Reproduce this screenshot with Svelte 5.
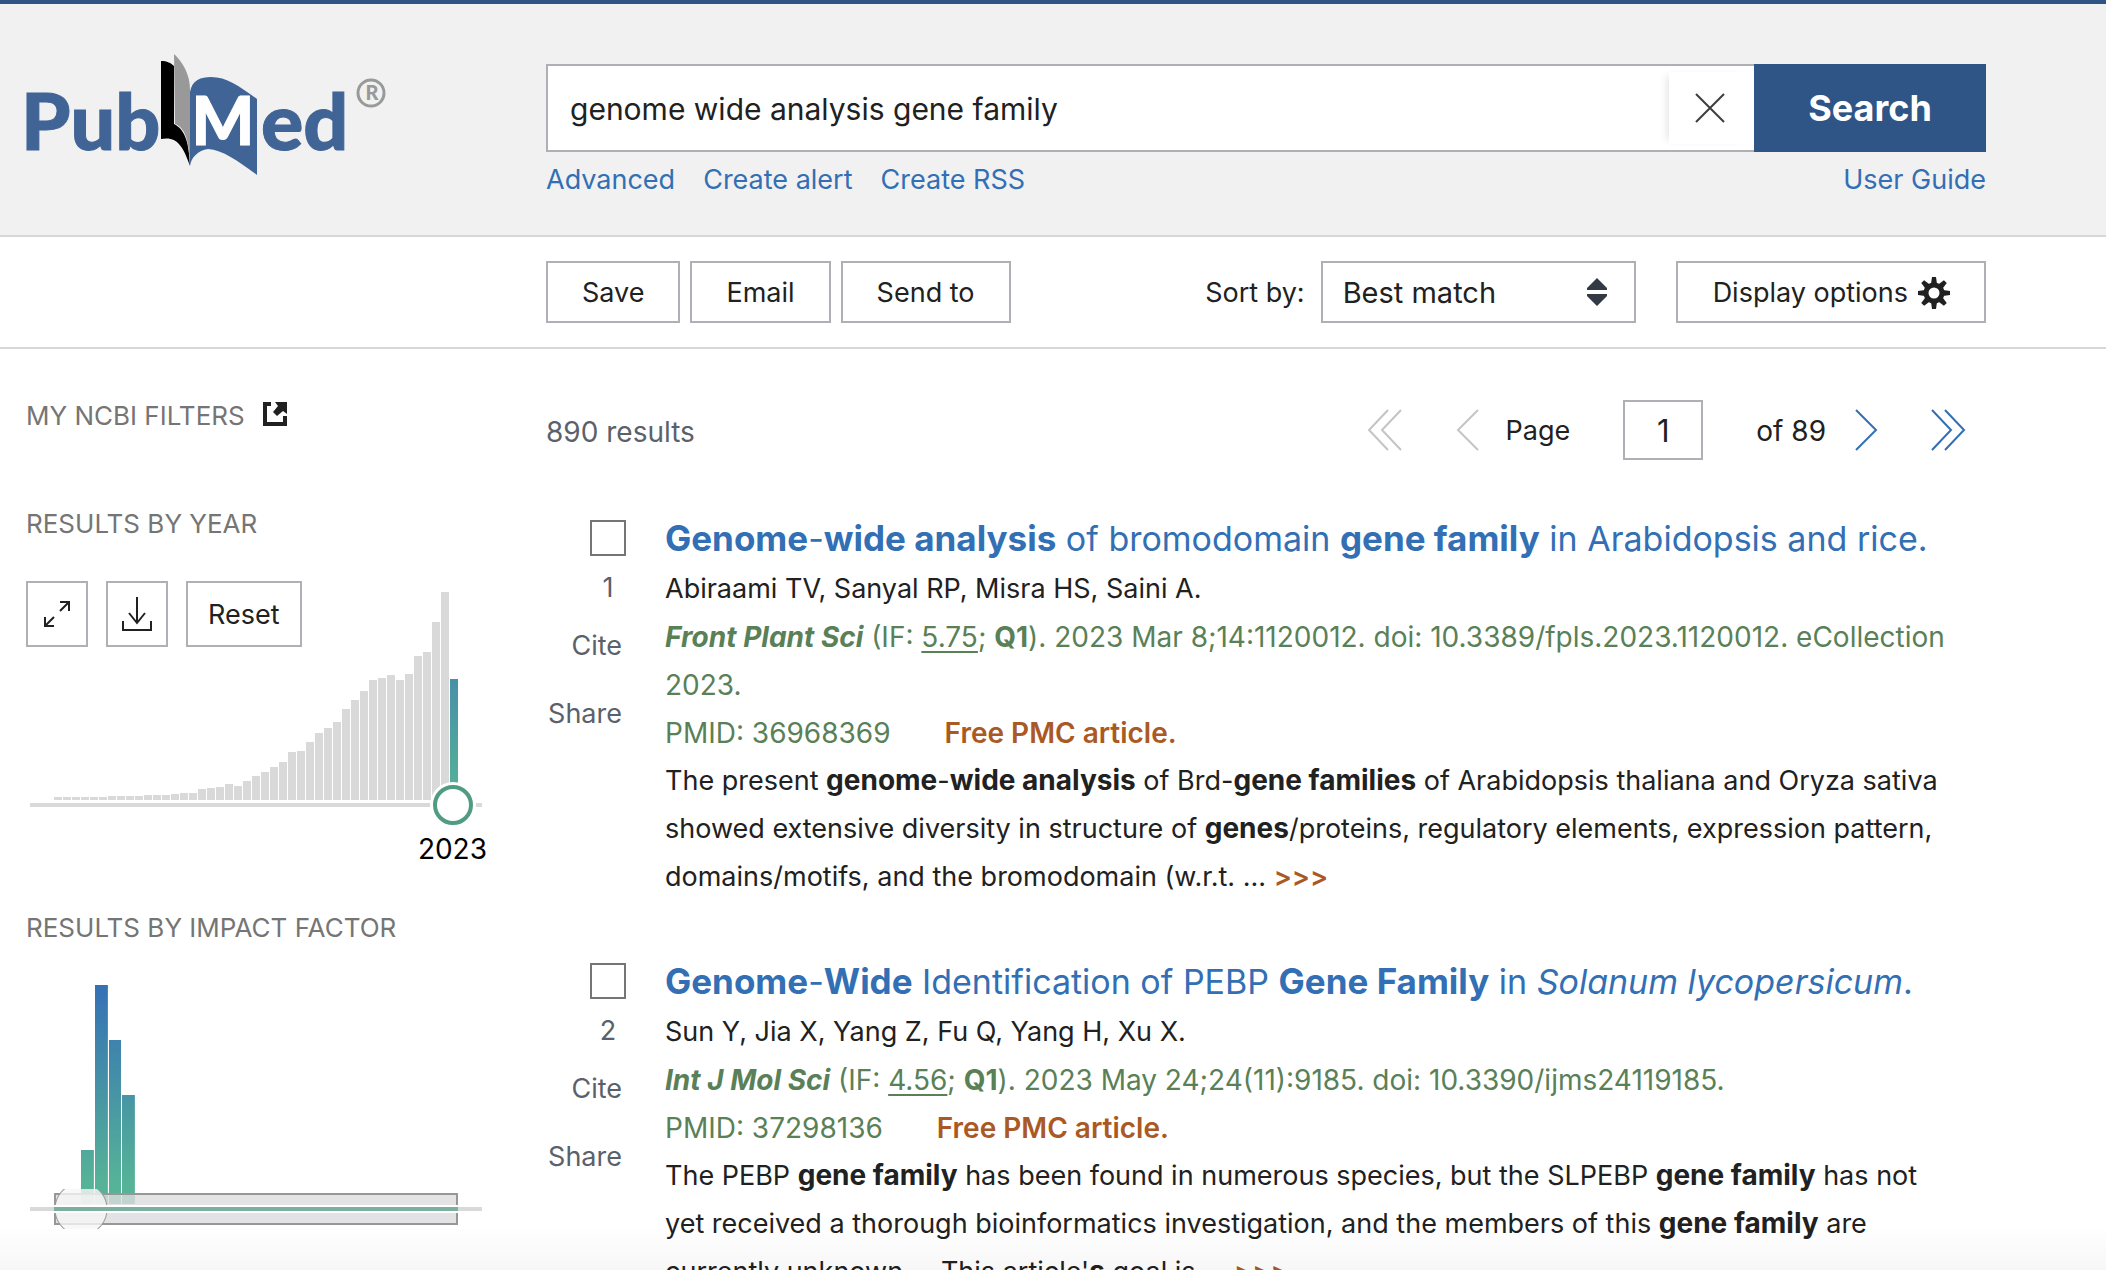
<script lang="ts">
	type Article = {
		id: number;
		title: string;
		authors: string;
		journal: string;
		impact: string;
		citation: string;
		pmid: string;
		snippet: string;
	};

	let query = 'genome wide analysis gene family';
	let sort = 'Best match';
	let page = '1';
	let year = 2023;
	let impactFactor = 3;

	// bar heights in px, one per year
	const years = [
		3, 3, 3, 3, 3, 3, 4, 4, 4, 4, 5, 5, 5, 6, 7, 7, 11, 12, 13, 16, 14, 19,
		24, 28, 33, 38, 48, 49, 58, 67, 72, 78, 91, 100, 109, 120, 122, 125, 120,
		126, 144, 148, 178, 208, 121
	];
	const impacts = [54, 219, 164, 109];

	const articles: Article[] = [
		{
			id: 1,
			title:
				'<b>Genome</b>-<b>wide analysis</b> of bromodomain <b>gene family</b> in Arabidopsis and rice.',
			authors: 'Abiraami TV, Sanyal RP, Misra HS, Saini A.',
			journal: 'Front Plant Sci',
			impact: '5.75',
			citation: '2023 Mar 8;14:1120012. doi: 10.3389/fpls.2023.1120012. eCollection 2023.',
			pmid: '36968369',
			snippet:
				'The present <b>genome</b>-<b>wide analysis</b> of Brd-<b>gene families</b> of Arabidopsis thaliana and Oryza sativa showed extensive diversity in structure of <b>genes</b>/proteins, regulatory elements, expression pattern, domains/motifs, and the bromodomain (w.r.t. ...'
		},
		{
			id: 2,
			title:
				'<b>Genome</b>-<b>Wide</b> Identification of PEBP <b>Gene Family</b> in <i>Solanum lycopersicum</i>.',
			authors: 'Sun Y, Jia X, Yang Z, Fu Q, Yang H, Xu X.',
			journal: 'Int J Mol Sci',
			impact: '4.56',
			citation: '2023 May 24;24(11):9185. doi: 10.3390/ijms24119185.',
			pmid: '37298136',
			snippet:
				"The PEBP <b>gene family</b> has been found in numerous species, but the SLPEBP <b>gene family</b> has not yet received a thorough bioinformatics investigation, and the members of this <b>gene family</b> are currently unknown. ...This article'<b>s</b> goal is ..."
		}
	];
</script>

<svelte:head>
	<title>genome wide analysis gene family - Search Results - PubMed</title>
</svelte:head>

<header class="header">
	<a class="logo" href="#home" aria-label="PubMed">
		<svg viewBox="0 0 370 130" width="370" height="130">
			<g class="logo-text">
				<text x="-5" y="100">Pub</text>
				<text x="235" y="100">ed</text>
			</g>
			<path d="M135 11C141 11 145 13 148 16V74C158 79 163 90 164 116C157 96 151 86 135 89Z" fill="#000" />
			<path d="M148 4C157 12 164 25 164 39V116C163 92 160 78 149 74Z" fill="#999" />
			<path d="M164 42C166 30 175 27 185 27C201 27 213 36 231 49V125C212 111 197 100 182 99C172 100 165 108 164 116Z" fill="#416496" />
			<text class="logo-m" x="197" y="95" text-anchor="middle">M</text>
			<circle cx="345" cy="43" r="13" fill="none" stroke="#999" stroke-width="3" />
			<text class="logo-r" x="346" y="50" text-anchor="middle">R</text>
		</svg>
	</a>
	<form class="search" on:submit|preventDefault>
		<div class="search-row">
			<div class="search-box">
				<input type="text" aria-label="Search term" bind:value={query} />
				<button type="button" class="clear" aria-label="Clear search input" on:click={() => (query = '')}>
					<svg viewBox="0 0 30 30" width="30" height="30">
						<path d="M1 1L29 29M29 1L1 29" stroke="#3d3d3d" stroke-width="2" />
					</svg>
				</button>
			</div>
			<button type="submit" class="search-button">Search</button>
		</div>
		<nav class="search-links">
			<a href="#advanced">Advanced</a>
			<a href="#alert">Create alert</a>
			<a href="#rss">Create RSS</a>
			<a class="guide" href="#guide">User Guide</a>
		</nav>
	</form>
</header>

<div class="toolbar">
	<button class="btn">Save</button>
	<button class="btn">Email</button>
	<button class="btn">Send to</button>
	<label class="sort-label" for="sort">Sort by:</label>
	<div class="select">
		<select id="sort" bind:value={sort}>
			<option>Best match</option>
			<option>Most recent</option>
			<option>Publication date</option>
		</select>
		<svg viewBox="0 0 22 28" width="22" height="28">
			<path d="M11 0L21 10V12H1V10ZM1 16H21V18L11 28L1 18Z" fill="#323a45" />
		</svg>
	</div>
	<button class="btn display">
		Display options
		<svg viewBox="0 0 32 32" width="32" height="32">
			<g fill="#212121">
				{#each [0, 45, 90, 135, 180, 225, 270, 315] as angle}
					<path d="M13 7L14 0H18L19 7Z" transform="rotate({angle} 16 16)" />
				{/each}
			</g>
			<circle cx="16" cy="16" r="8" fill="none" stroke="#212121" stroke-width="5" />
		</svg>
	</button>
</div>

<div class="content">
	<aside class="sidebar">
		<h3 class="filters">
			MY NCBI FILTERS
			<svg viewBox="0 0 24 24" width="24" height="24">
				<path d="M8 0H0V24H24V14H20V20H4V4H8Z" fill="#212121" />
				<path d="M12 0H24V12L20 9L14 14L10 10L15 4Z" fill="#212121" />
			</svg>
		</h3>

		<h3>RESULTS BY YEAR</h3>
		<div class="timeline">
			<div class="timeline-buttons">
				<button class="btn square" aria-label="Expand">
					<svg viewBox="0 0 28 28" width="28" height="28">
						<path d="M17 2H26V11M26 2L17 11M2 17V26H11M2 26L11 17" fill="none" stroke="#212121" stroke-width="2" />
					</svg>
				</button>
				<button class="btn square" aria-label="Download">
					<svg viewBox="0 0 30 34" width="30" height="34">
						<path d="M15 0V26M7 16L15 26L23 16M1 24V33H29V24" fill="none" stroke="#212121" stroke-width="2" />
					</svg>
				</button>
				<button class="btn reset">Reset</button>
			</div>
			<div class="bars year-bars">
				{#each years as height, i}
					<span class:selected={i === years.length - 1} style="height: {height}px"></span>
				{/each}
			</div>
			<input class="year-range" type="range" aria-label="Year" min="1978" max="2024" bind:value={year} />
			<p class="year-label">{year}</p>
		</div>

		<h3>RESULTS BY IMPACT FACTOR</h3>
		<div class="impact">
			<div class="bars impact-bars">
				{#each impacts as height}
					<span style="height: {height}px"></span>
				{/each}
			</div>
			<div class="impact-slider">
				<div class="impact-box"></div>
				<input class="impact-range" type="range" aria-label="Impact factor" min="0" max="50" bind:value={impactFactor} />
				<div class="impact-line"></div>
			</div>
		</div>
	</aside>

	<main class="results">
		<div class="results-top">
			<p class="amount">890 results</p>
			<nav class="pagination">
				<button aria-label="First page" disabled>
					<svg viewBox="0 0 36 42" width="36" height="42"><path d="M21 1L2 21L21 41M34 1L15 21L34 41" /></svg>
				</button>
				<button aria-label="Previous page" disabled>
					<svg viewBox="0 0 24 42" width="24" height="42"><path d="M22 1L2 21L22 41" /></svg>
				</button>
				<label for="page">Page</label>
				<input id="page" type="text" bind:value={page} />
				<span class="of">of 89</span>
				<button aria-label="Next page">
					<svg viewBox="0 0 24 42" width="24" height="42"><path d="M2 1L22 21L2 41" /></svg>
				</button>
				<button aria-label="Last page">
					<svg viewBox="0 0 36 42" width="36" height="42"><path d="M2 1L21 21L2 41M15 1L34 21L15 41" /></svg>
				</button>
			</nav>
		</div>

		{#each articles as article}
			<article>
				<div class="actions">
					<label>
						<input type="checkbox" />
						<span>{article.id}</span>
					</label>
					<button>Cite</button>
					<button>Share</button>
				</div>
				<div class="text">
					<h2><a href="#{article.pmid}">{@html article.title}</a></h2>
					<p>{article.authors}</p>
					<p class="citation">
						<b><i>{article.journal}</i></b> (IF: <u>{article.impact}</u>; <b>Q1</b>). {article.citation}
					</p>
					<p class="citation ids">
						<span>PMID: {article.pmid}</span>
						<span class="free">Free PMC article.</span>
					</p>
					<p class="snippet">
						{@html article.snippet} <a class="more" href="#{article.pmid}">&gt;&gt;&gt;</a>
					</p>
				</div>
			</article>
		{/each}
	</main>
</div>
<div class="fade"></div>

<style>
	:global(body) {
		background: #fff;
		color: #212121;
		font-family: Inter, 'Liberation Sans', sans-serif;
		font-size: 27px;
		line-height: 48px;
		height: 100vh;
		overflow: hidden;
	}

	/* keeps the larger bold text from stretching its line */
	:global(b) {
		font-weight: 700;
		line-height: 1;
	}

	h2, h3, p {
		margin: 0;
		font-weight: 400;
	}

	a {
		color: #326fb4;
		text-decoration: none;
	}

	button, input, select {
		box-sizing: border-box;
		margin: 0;
		border-radius: 0;
		font: inherit;
		color: inherit;
	}

	svg {
		display: block;
		flex: none;
	}

	.header {
		display: grid;
		grid-template-columns: 520px 1fr;
		box-sizing: border-box;
		height: 237px;
		padding: 46px 120px 0 26px;
		background: #f1f1f1;
		border-top: 4px solid #2f5586;
		border-bottom: 2px solid #d6d7d9;
	}

	.logo {
		height: 130px;
	}

	.logo svg {
		overflow: visible;
	}

	.logo-text {
		font-family: Lato, sans-serif;
		font-size: 79px;
		font-weight: 900;
		fill: #416496;
		stroke: #416496;
		stroke-width: 1px;
	}

	.logo-m {
		font-family: Lato, sans-serif;
		font-size: 66px;
		font-weight: 900;
		fill: #fff;
		stroke: #fff;
		stroke-width: 1px;
	}

	.logo-r {
		font-family: Lato, sans-serif;
		font-size: 20px;
		font-weight: 900;
		fill: #999;
	}

	.search {
		padding-top: 14px;
	}

	.search-row {
		display: flex;
		height: 88px;
	}

	.search-box {
		display: flex;
		flex: 1;
		align-items: center;
		background: #fff;
		border: 2px solid #aeb0b5;
		border-right: 0;
	}

	.search-box input {
		flex: 1;
		height: 84px;
		padding: 2px 22px 0;
		border: 0;
		outline: 0;
		background: none;
		font-size: 30px;
	}

	.clear {
		display: flex;
		align-items: center;
		justify-content: center;
		width: 85px;
		height: 72px;
		padding: 0 4px 0 0;
		border: 0;
		background: #fff;
		box-shadow: -6px 0 8px -4px #e4e4e4;
	}

	.search-button {
		width: 232px;
		border: 0;
		background: #2f5586;
		color: #fff;
		font-size: 36px;
		font-weight: 700;
	}

	.search-links {
		display: flex;
		gap: 28px;
		padding-top: 4px;
	}

	.guide {
		margin-left: auto;
	}

	.toolbar {
		display: flex;
		align-items: center;
		gap: 10px;
		height: 110px;
		padding: 0 120px 0 546px;
		border-bottom: 2px solid #d6d7d9;
	}

	.btn {
		height: 62px;
		padding: 2px 34px 0;
		border: 2px solid #aeb0b5;
		background: #fff;
	}

	.sort-label {
		margin-left: auto;
		padding: 2px 6px 0 0;
	}

	.select {
		position: relative;
		width: 315px;
		margin-right: 30px;
	}

	.select select {
		display: block;
		width: 100%;
		height: 62px;
		padding: 2px 20px 0;
		border: 2px solid #aeb0b5;
		background: #fff;
		font-size: 29px;
		appearance: none;
	}

	.select svg {
		position: absolute;
		top: 17px;
		right: 28px;
		pointer-events: none;
	}

	.display {
		display: flex;
		align-items: center;
		gap: 10px;
		padding-left: 35px;
	}

	.content {
		display: grid;
		grid-template-columns: 456px 1fr;
		gap: 64px;
		padding: 42px 120px 0 26px;
	}

	.sidebar {
		padding-top: 1px;
	}

	h3 {
		color: #757575;
		font-size: 26px;
		line-height: 48px;
	}

	.filters {
		display: flex;
		align-items: center;
		gap: 18px;
		margin-bottom: 60px;
	}

	.filters svg {
		margin-bottom: 4px;
	}

	.timeline {
		display: flow-root;
		margin: 9px 0 31px;
	}

	.timeline-buttons {
		display: flex;
		gap: 18px;
		height: 0;
		padding-top: 24px;
	}

	.timeline-buttons .btn {
		height: 66px;
	}

	.timeline-buttons .square {
		display: flex;
		align-items: center;
		justify-content: center;
		width: 62px;
		padding: 0;
	}

	.timeline-buttons .reset {
		padding: 2px 20px 0;
	}

	.bars {
		display: flex;
		align-items: flex-end;
		gap: 1px;
		padding-left: 28px;
	}

	.year-bars {
		height: 219px;
	}

	.year-bars span {
		width: 8px;
		background: #d9d9d9;
	}

	.year-bars .selected {
		background: linear-gradient(#4790a8, #56b397);
	}

	.year-range {
		display: block;
		width: 452px;
		height: 40px;
		margin: -15px 0 0 4px;
		background: linear-gradient(#d9d9d9, #d9d9d9) center / 100% 4px no-repeat;
		appearance: none;
	}

	.year-range::-webkit-slider-thumb {
		width: 40px;
		height: 40px;
		border: 4px solid #519b84;
		border-radius: 50%;
		background: #fff;
		box-shadow: 0 0 0 3px #fff;
		appearance: none;
	}

	.year-label {
		width: 461px;
		color: #000;
		font-size: 28px;
		text-align: right;
	}

	.impact {
		padding-top: 25px;
	}

	.impact-bars {
		width: 54px;
		height: 227px;
		padding-left: 55px;
	}

	.impact-bars span {
		flex: 1;
		background: linear-gradient(to top, #56b397 20px, #3570b5 219px) bottom / 100% 219px;
	}

	.impact-slider {
		position: relative;
		width: 452px;
		height: 40px;
		margin: -15px 0 0 4px;
	}

	.impact-box {
		position: absolute;
		inset: 4px 24px;
		border: 2px solid #979797;
		background: rgba(220, 220, 223, 0.8);
	}

	.impact-range {
		position: absolute;
		inset: 0;
		width: 100%;
		height: 40px;
		background: none;
		appearance: none;
	}

	.impact-range::-webkit-slider-thumb {
		width: 54px;
		height: 40px;
		border: 0;
		background: radial-gradient(circle, rgba(246, 246, 246, 0.8) 25px, #999 26px, #999 26px, transparent 27px);
		appearance: none;
	}

	.impact-line {
		position: absolute;
		inset: 16px 0;
		border: solid #fff;
		border-width: 2px 0;
		background: linear-gradient(to right, #d9d9d9 24px, #7bb09f 24px, #7bb09f 428px, #d9d9d9 428px);
		pointer-events: none;
	}

	.results-top {
		display: flex;
		align-items: center;
		justify-content: space-between;
		height: 78px;
		margin-bottom: 44px;
	}

	.amount {
		padding-top: 4px;
		color: #5b616b;
		font-size: 28px;
	}

	.pagination {
		display: flex;
		align-items: center;
		padding-right: 20px;
	}

	.pagination button {
		display: block;
		padding: 0;
		border: 0;
		background: none;
		margin-right: 53px;
	}

	.pagination button:nth-child(2) {
		margin-right: 26px;
	}

	.pagination button:nth-of-type(3) {
		margin-right: 28px;
	}

	.pagination button:last-child {
		margin: 0 0 0 24px;
	}

	.pagination path {
		fill: none;
		stroke: #326fb4;
		stroke-width: 2;
	}

	.pagination button:disabled path {
		stroke: #c4c4c4;
	}

	.pagination label, .of {
		padding-top: 2px;
	}

	.pagination input {
		width: 80px;
		height: 60px;
		margin: 0 53px;
		padding: 0;
		border: 2px solid #aeb0b5;
		font-size: 31px;
		text-align: center;
	}

	.of {
		margin-right: 28px;
		font-size: 28px;
	}

	article {
		display: grid;
		grid-template-columns: 80px 1fr;
		gap: 39px;
		margin-bottom: 55px;
	}

	.actions {
		display: flex;
		flex-direction: column;
		align-items: flex-end;
		color: #5b616b;
	}

	.actions label {
		display: flex;
		flex-direction: column;
		align-items: center;
		width: 36px;
		padding-top: 7px;
	}

	.actions input {
		width: 36px;
		height: 36px;
		margin-bottom: 8px;
		border: 2px solid #757575;
		appearance: none;
	}

	.actions button {
		height: 48px;
		margin: 10px 0;
		padding: 0 4px 0 0;
		border: 0;
		background: none;
	}

	.text {
		padding-right: 32px;
	}

	h2 {
		font-size: 34px;
		line-height: 52px;
	}

	h2 :global(b) {
		font-size: 35px;
	}

	.citation {
		color: #598057;
		font-size: 28px;
	}

	.snippet :global(b) {
		font-size: 28px;
	}

	u {
		text-underline-offset: 4px;
	}

	.ids {
		display: flex;
		gap: 54px;
	}

	.free, .more {
		color: #ab5924;
		font-weight: 600;
	}

	/* soft shade along the bottom of the window */
	.fade {
		position: fixed;
		inset: auto 0 0;
		height: 44px;
		background: linear-gradient(transparent, rgba(0, 0, 0, 0.03));
		pointer-events: none;
	}
</style>
